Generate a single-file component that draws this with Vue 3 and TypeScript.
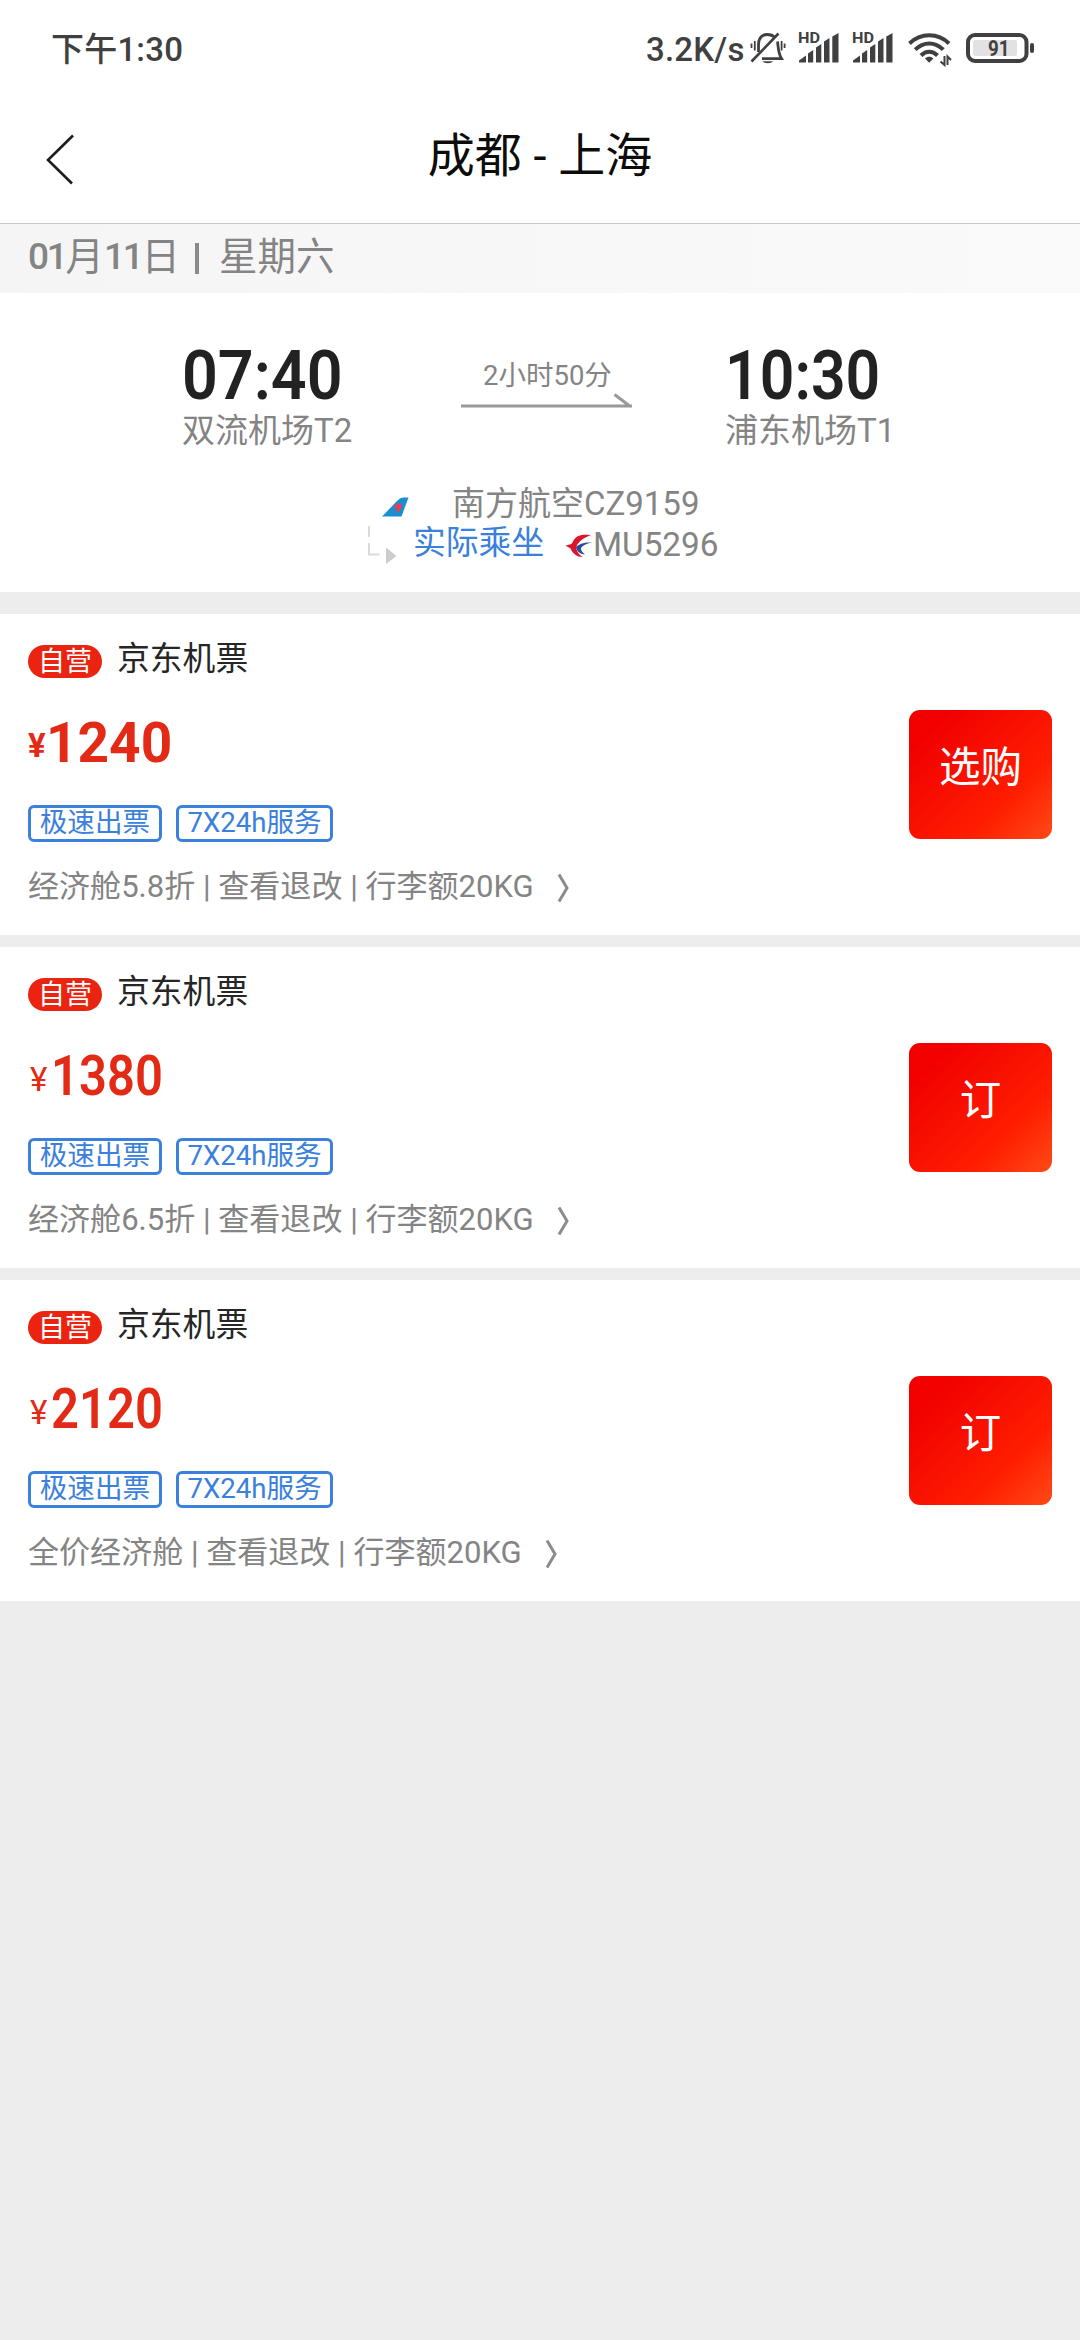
<script setup lang="ts">
interface Offer {
  price: string
  featured: boolean
  cabin: string
  action: string
}

const offers: Offer[] = [
  { price: '1240', featured: true, cabin: '经济舱5.8折', action: '选购' },
  { price: '1380', featured: false, cabin: '经济舱6.5折', action: '订' },
  { price: '2120', featured: false, cabin: '全价经济舱', action: '订' },
]
const tags: string[] = ['极速出票', '7X24h服务']
</script>

<template>
  <div class="screen">
    <div class="status">
      <span class="clock">下午1:30</span>
      <span class="speed">3.2K/s</span>
      <svg class="bell" width="36" height="34" viewBox="0 0 36 34" fill="none" stroke="#404040">
        <path d="M8.500 21V14C8.500 7 12 3.500 17.500 3.500C20.500 3.500 23 4.500 25 6.500" stroke-width="2.800" />
        <path d="M27.500 10.500C28.300 15.500 28 22 31.500 27.600H12" stroke-width="2.800" />
        <path d="M1.500 30.500L28.500 2.500" stroke-width="2.600" />
        <path d="M4.800 10V19.500M1.500 12.500V17M31.600 10V19.500M34.600 12.500V17" stroke-width="1.800" />
        <path d="M12.500 30.200H23C21.500 32.800 14 32.800 12.500 30.200Z" fill="#404040" stroke="none" />
      </svg>
      <svg v-for="n in 2" :key="n" :class="['signal', { second: n === 2 }]" width="43" height="42" viewBox="0 -8 43 42">
        <text x="0" y="12" font-size="15" textLength="22" lengthAdjust="spacingAndGlyphs">HD</text>
        <path
          d="M1 29.500L8 24.500V31Q8 31.500 7.500 31.500H1ZM10 22.500L15.200 19V31.500H10ZM18 16.500L23.300 13V31.500H18ZM26 10.500L31.500 7V31.500H26ZM34.300 5.500L40.500 2V31.500H34.300Z"
        />
      </svg>
      <svg class="wifi" width="44" height="36" viewBox="0 0 44 36" fill="none" stroke="#404040" stroke-width="4">
        <path d="M1.500 12.500C12.500 1.500 30 1.500 41 12.500" />
        <path d="M7.200 18.700C15.500 10.500 27 10.500 35.300 18.700" />
        <path d="M13 24.500C18 19.500 24.500 19.500 29.500 24.500" />
        <path d="M21.200 31.800L17 27.500C19.500 25.200 23 25.200 25.400 27.500Z" fill="#404040" stroke="none" />
        <path d="M36.500 25V34L32.500 30.500M39.500 34V25.500L43 29" stroke-width="2" />
      </svg>
      <svg class="battery" width="70" height="32" viewBox="0 0 70 32">
        <rect x="2" y="3" width="58.500" height="26" rx="7" fill="none" stroke="#404040" stroke-width="4" />
        <rect x="7" y="8" width="44" height="16" rx="2" fill="#e2e2e2" />
        <rect x="64" y="11" width="4" height="10" rx="2" />
        <text x="22" y="24" font-size="22" textLength="21.500" lengthAdjust="spacingAndGlyphs">91</text>
      </svg>
    </div>

    <header class="nav">
      <svg class="back" width="30" height="52" viewBox="0 0 30 52" fill="none" stroke="#1c1c1c" stroke-width="2.600">
        <path d="M27 1.500L2 26L26 49.500" />
      </svg>
      <h1>成都 - 上海</h1>
    </header>

    <div class="date">
      <b>01</b><span>月</span><b>11</b><span>日</span><i></i><span>星期六</span>
    </div>

    <section class="flight">
      <div class="route">
        <div class="stop from">
          <div class="time">07:40</div>
          <div class="airport">双流机场T2</div>
        </div>
        <div class="span">
          <div class="duration">2小时50分</div>
          <svg width="172" height="18" viewBox="0 0 172 18" fill="none" stroke="#999" stroke-width="3">
            <path d="M0 15H171M153.500 3.500L168 14.500" />
          </svg>
        </div>
        <div class="stop to">
          <div class="time">10:30</div>
          <div class="airport">浦东机场T1</div>
        </div>
      </div>
      <div class="carrier">
        <svg width="28" height="20" viewBox="0 0 28 20">
          <path d="M0 19.500L15 4C17.500 1.500 19 .5 22 .5H26.500L19.500 19.500Z" fill="#1a8fd0" />
          <path d="M12 9.500C13 6 20 5.500 20 8.500C20 11 17.500 11 18 15H15C15.500 11 13 12 12 9.500Z" fill="#e0405a" />
        </svg>
        <span>南方航空CZ9159</span>
      </div>
      <div class="operator">
        <svg class="elbow" width="30" height="40" viewBox="0 0 30 40">
          <path d="M1 0V11M1 17V28.500H11.500" fill="none" stroke="#dadada" stroke-width="2" />
          <path d="M18 21.500L28.500 30L18 38Z" fill="#ccc" />
        </svg>
        <span class="actual">实际乘坐</span>
        <svg class="mu" width="28" height="24" viewBox="0 0 28 24">
          <path d="M26 1C17 0 12 1 8.500 6.500L6.500 10L.5 11.500L5.500 14.500C8 20 12 23 17.500 23C13.500 20 11 16.500 11.500 12.500C13 8 18 4 26 1Z" fill="#dc142c" />
          <path d="M27.500 8.500C19 8 14 10 11 13C12.500 19 16 20 20 20.500C17 18 15.500 16 16 14C18 11 22 9.500 27.500 8.500Z" fill="#2c4d9b" />
        </svg>
        <span class="number">MU5296</span>
      </div>
    </section>

    <section v-for="offer in offers" :key="offer.price" class="card">
      <div class="details">
        <div class="seller"><span class="badge">自营</span><span class="name">京东机票</span></div>
        <div :class="['price', { featured: offer.featured }]">
          <span class="yen">¥</span><span class="amount">{{ offer.price }}</span>
        </div>
        <div class="tags"><span v-for="tag in tags" :key="tag" class="tag">{{ tag }}</span></div>
        <div class="info">
          <span>{{ offer.cabin }} | 查看退改 | 行李额20KG</span>
          <svg width="13" height="28" viewBox="0 0 13 28" fill="none" stroke="#8c8c8c" stroke-width="3">
            <path d="M2 .5L10 14L2 27.500" />
          </svg>
        </div>
      </div>
      <button type="button" class="buy">{{ offer.action }}</button>
    </section>
  </div>
</template>

<style>
body {
  background: #ededed;
}
</style>

<style scoped>
.screen {
  width: 1080px;
  height: 2340px;
  overflow: hidden;
  background: #ededed;
  color: #848484;
  font-family: Roboto, 'Noto Sans CJK SC', sans-serif;
  white-space: nowrap;
}

.status {
  display: flex;
  align-items: flex-start;
  height: 96px;
  background: #fff;
  color: #404040;
  font-size: 33px;
  font-weight: 500;
  line-height: 40px;
}
.status svg {
  flex: none;
  fill: #404040;
}
.status svg[fill='none'] {
  fill: none;
}
.clock {
  width: 593px;
  padding: 30px 0 0 51px;
  letter-spacing: 0.2px;
}
.speed {
  width: 104px;
  padding: 30px 0 0 2px;
  letter-spacing: 0.2px;
}
.bell {
  margin-top: 31px;
}
.signal {
  margin: 23px 0 0 12px;
}
.signal.second {
  margin-left: 11px;
}
.signal text,
.battery text {
  font-weight: 700;
}
.wifi {
  margin: 31px 0 0 13px;
}
.battery {
  margin: 32px 0 0 14px;
}

.nav {
  display: flex;
  align-items: center;
  height: 127px;
  border-bottom: 1px solid #c8c8c8;
  background: #fff;
}
.back {
  flex: none;
  margin: 0 0 0 46px;
}
.nav h1 {
  flex: 1;
  margin: -7px 76px 0 0;
  color: #0c0c0c;
  font-size: 47px;
  font-weight: 400;
  line-height: 60px;
  text-align: center;
}

.date {
  display: flex;
  height: 69px;
  padding-left: 28px;
  background: linear-gradient(90deg, #f5f5f5, #fafafa);
  font-size: 38.500px;
  line-height: 65px;
}
.date b {
  width: 37.500px;
  font-size: 37px;
  font-weight: 500;
  letter-spacing: -2.200px;
}
.date i {
  width: 4px;
  height: 31px;
  margin: 19px 20px 0 15px;
  background: #8a8a8a;
}

.flight {
  height: 252px;
  padding-top: 47px;
  background: #fff;
}
.route {
  display: flex;
  height: 140px;
}
.from {
  width: 279px;
  padding-left: 182px;
}
.time {
  height: 71px;
  color: #222;
  font-size: 69px;
  font-weight: 600;
  line-height: 72px;
  transform: scaleX(0.91);
  transform-origin: left;
}
.to .time {
  transform: scaleX(0.88);
}
.airport {
  font-size: 33px;
  line-height: 40px;
}
.span {
  width: 172px;
}
.duration {
  height: 51px;
  padding-left: 22px;
  font-size: 27.500px;
  line-height: 72px;
}
.span svg {
  display: block;
}
.to {
  padding-left: 92px;
}
.carrier {
  display: flex;
  height: 40px;
  padding-left: 382px;
  font-size: 33px;
  line-height: 48px;
}
.carrier svg {
  margin: 17px 42px 0 0;
}
.operator {
  display: flex;
  padding-left: 368px;
  font-size: 32.800px;
  line-height: 46px;
}
.elbow {
  margin-top: 6px;
}
.actual {
  width: 152px;
  padding-left: 15px;
  color: #3a80dc;
}
.mu {
  margin-top: 14px;
}
.number {
  font-size: 33.300px;
  line-height: 50px;
}

.card {
  display: flex;
  height: 321px;
  margin-top: 12px;
  background: #fff;
}
.flight + .card {
  margin-top: 22px;
}
.details {
  width: 881px;
  padding: 22px 0 0 28px;
}
.seller {
  display: flex;
  height: 44px;
}
.badge {
  width: 74px;
  height: 33px;
  margin: 9px 15px 0 0;
  border-radius: 17px;
  background: #ea2410;
  color: #fff;
  font-size: 27px;
  line-height: 35px;
  text-align: center;
}
.name {
  color: #262626;
  font-size: 32.800px;
  line-height: 46px;
}
.price {
  display: flex;
  height: 125px;
  color: #e32a16;
  line-height: 126px;
}
.yen {
  width: 21px;
  padding-left: 2px;
  font-size: 33px;
  line-height: 133px;
}
.amount {
  font-size: 55px;
  font-weight: 600;
  transform: scaleX(0.89);
  transform-origin: left;
}
.featured .yen {
  width: 18px;
  padding-left: 0;
  font-weight: 700;
  line-height: 131px;
}
.featured .amount {
  font-weight: 700;
  transform: none;
}
.tags {
  display: flex;
  gap: 14px;
}
.tag {
  height: 31px;
  padding: 0 8.700px;
  border: 3px solid #3a80dc;
  border-radius: 6px;
  color: #3a80dc;
  font-size: 27.600px;
  line-height: 29px;
}
.info {
  display: flex;
  margin-top: 25px;
  font-size: 31.050px;
  line-height: 40px;
}
.info svg {
  margin: 7px 0 0 23px;
}
.buy {
  width: 143px;
  height: 129px;
  margin-top: 96px;
  padding: 0 0 21px;
  border: 0;
  border-radius: 11px;
  background: linear-gradient(135deg, #f20000 15%, #ff1e00 70%, #ff4a17);
  color: #fff;
  font: inherit;
  font-size: 41.500px;
}
</style>
